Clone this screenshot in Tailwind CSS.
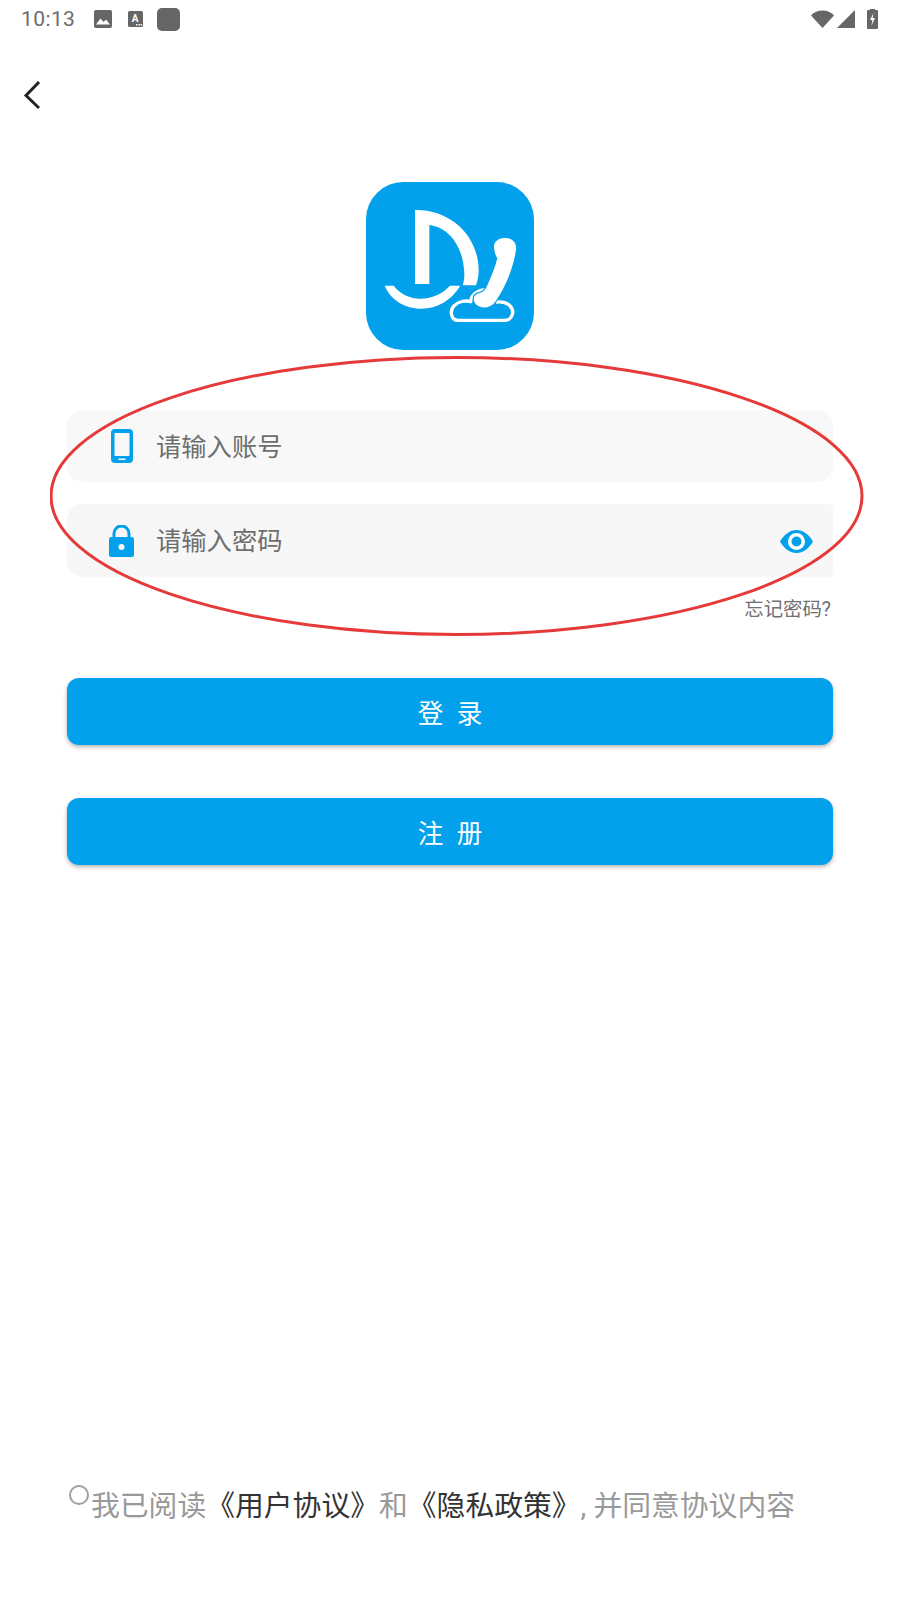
<!DOCTYPE html>
<html lang="zh">
<head>
<meta charset="utf-8">
<script src="https://cdn.jsdelivr.net/npm/@tailwindcss/browser@4"></script>
</head>
<body class="bg-white">
<div class="relative w-[900px] h-[1600px] overflow-hidden bg-white flex flex-col font-['Roboto','Noto_Sans_CJK_SC',sans-serif]">
  <!-- status bar -->
  <div class="h-[38px] flex items-center pl-[21px] pr-[22px] text-[#6d6d6d]">
    <span class="text-[21px] leading-none tracking-[0.4px] w-[53px]">10:13</span>
    <svg class="ml-[20px] w-[18px] h-[18px]" viewBox="0 0 18 18"><rect width="18" height="18" rx="2" fill="#666"/><path d="M2 14.5l4.5-6 3 3.5 2.5-2.5 4 5z" fill="#fff"/></svg>
    <svg class="ml-[16px] w-[15px] h-[16px]" viewBox="0 0 15 16"><rect width="15" height="16" rx="1.5" fill="#666"/><text x="7" y="10.5" font-size="10" font-weight="700" text-anchor="middle" fill="#fff" font-family="Roboto">A</text><path d="M8 13h1.4v1.4H8zM10.4 13h1.4v1.4h-1.4zM12.6 13H14v1.4h-1.4z" fill="#fff"/></svg>
    <div class="ml-[14px] w-[23px] h-[23px] rounded-[5px] bg-[#666]"></div>
    <div class="ml-auto flex items-center">
      <svg class="w-[23px] h-[18px]" viewBox="0 0 23 18"><path d="M0 5.5C3 2.3 7 .5 11.5 .5S20 2.3 23 5.5L11.5 18z" fill="#666"/></svg>
      <svg class="ml-[3px] w-[18px] h-[18px]" viewBox="0 0 18 18"><path d="M0 18L18 0v18z" fill="#666"/></svg>
      <svg class="ml-[12px] w-[11px] h-[20px]" viewBox="0 0 11 20"><path d="M3 1V0h5v1h2a1 1 0 0 1 1 1v17a1 1 0 0 1-1 1H1a1 1 0 0 1-1-1V2a1 1 0 0 1 1-1z" fill="#666"/><path d="M6.5 4L3 11h2.4L4.500 16.500 8 9H5.600z" fill="#fff"/></svg>
    </div>
  </div>

  <!-- back -->
  <div class="h-[114px] pl-[23px] flex items-center">
    <svg class="w-[18px] h-[30px]" viewBox="0 0 18 30" fill="none"><path d="M16 2L3 15.500 16 28" stroke="#222" stroke-width="3"/></svg>
  </div>

  <!-- logo -->
  <div class="mt-[30px] flex justify-center">
    <svg class="w-[168px] h-[168px]" viewBox="48 36 504 504">
      <rect x="48" y="36" width="504" height="504" rx="112" fill="#03a1ec"/>
      <path d="M195 120C300 118 385 195 386 300C386 318 383 332 378 346H338C343 332 344 316 342 298C336 225 295 172 238 165V342H195z" fill="#fff"/>
      <path d="M104 347H131C150 372 180 386 212 386C245 386 278 371 300 347H331C305 390 262 416 214 416C165 416 122 390 104 347z" fill="#fff"/>
      <path d="M324 451C302 451 298 420 314 406C324 395 345 390 362 395C364 372 388 356 416 360L440 396C470 392 490 410 488 430C486 443 476 451 463 451z" fill="none" stroke="#fff" stroke-width="10" stroke-linejoin="round"/>
      <path d="M432 232C430 214 450 202 468 204C489 206 501 220 498 241C491 286 472 342 438 392C425 414 396 418 380 405C367 394 369 376 382 371C396 367 404 364 410 350C424 320 436 290 442 264C436 256 433 244 432 232z" fill="#fff" stroke="#03a1ec" stroke-width="7" paint-order="stroke"/>
    </svg>
  </div>

  <!-- form -->
  <div class="mt-[60px] px-[67px] flex flex-col">
    <div class="h-[72px] rounded-[16px] bg-[#f8f8f8] flex items-center pl-[44px]">
      <svg class="w-[22px] h-[34px]" viewBox="0 0 22 34"><rect width="22" height="34" rx="4" fill="#03a1ec"/><rect x="3.500" y="4" width="15" height="23" rx="1" fill="#f8f8f8"/><rect x="7.500" y="29.500" width="7" height="1.500" fill="#f8f8f8"/></svg>
      <span class="ml-[23px] pt-[3px] text-[25.3px] leading-none text-[#6e6e6e]">请输入账号</span>
    </div>
    <div class="mt-[22px] h-[73px] rounded-l-[16px] rounded-r-[5px] bg-[#f7f7f7] flex items-center pl-[42px] pr-[20px]">
      <svg class="w-[25px] h-[32px]" viewBox="0 0 25 32"><path d="M5 14V8.500a7.500 7.500 0 0 1 15 0V14" fill="none" stroke="#03a1ec" stroke-width="3"/><rect y="12" width="25" height="20" rx="2.500" fill="#03a1ec"/><circle cx="12.500" cy="22" r="3" fill="#f7f7f7"/></svg>
      <span class="ml-[22px] pt-[2px] text-[25.3px] leading-none text-[#6e6e6e]">请输入密码</span>
      <svg class="ml-auto mt-[2px] w-[33px] h-[23px]" viewBox="0 0 33 23"><path d="M0 11.500C4 4.500 10 0 16.500 0S29 4.500 33 11.500C29 18.500 23 23 16.500 23S4 18.500 0 11.500z" fill="#03a1ec"/><circle cx="16.500" cy="11.500" r="8.500" fill="#fff"/><circle cx="16.500" cy="11.500" r="5" fill="#03a1ec"/></svg>
    </div>
    <div class="mt-[20px] pr-[2px] text-right text-[19.4px] leading-[26px] text-[#707070]">忘记密码?</div>

    <button class="mt-[55px] h-[67px] rounded-[12px] bg-[#03a1ec] text-white text-[25.6px] tracking-[13.500px] pl-[13.500px] shadow-[0_2px_4px_rgba(0,0,0,0.3)] pt-[5px]">登录</button>
    <button class="mt-[53px] h-[67px] rounded-[12px] bg-[#03a1ec] text-white text-[25.6px] tracking-[13.500px] pl-[13.500px] shadow-[0_2px_4px_rgba(0,0,0,0.3)] pt-[5px]">注册</button>
  </div>

  <!-- agreement -->
  <div class="mt-[620px] pl-[69px] flex items-start">
    <div class="w-[20px] h-[20px] rounded-full border-2 border-[#a0a0a0]"></div>
    <p class="ml-[2px] mt-[-1px] text-[28.8px] leading-[44px] text-[#999] whitespace-nowrap">我已阅读<span class="text-[#333]">《用户协议》</span>和<span class="text-[#333]">《隐私政策》</span>, 并同意协议内容</p>
  </div>

  <!-- red annotation -->
  <svg class="absolute left-[50px] top-[356px] w-[814px] h-[281px] pointer-events-none" viewBox="0 0 814 281" fill="none"><ellipse cx="406.500" cy="140" rx="405.500" ry="138.500" stroke="#e63a3a" stroke-width="3"/></svg>
</div>
</body>
</html>
